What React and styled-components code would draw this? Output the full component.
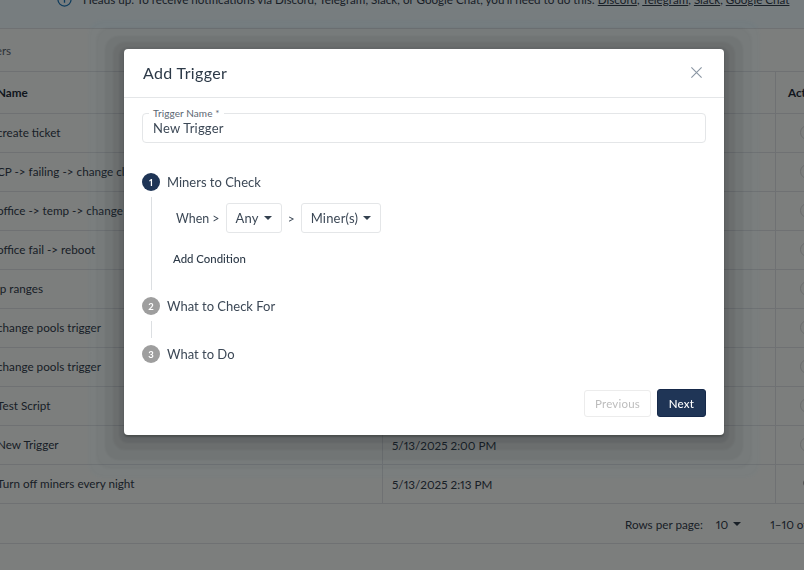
import React from 'react';
import styled, { createGlobalStyle } from 'styled-components';

const rows = [
  { name: 'create ticket' },
  { name: 'CP -> failing -> change clients' },
  { name: 'office -> temp -> change pool' },
  { name: 'office fail -> reboot' },
  { name: 'ip ranges' },
  { name: 'change pools trigger' },
  { name: 'change pools trigger' },
  { name: 'Test Script' },
  { name: 'New Trigger', date: '5/13/2025 2:00 PM' },
  { name: 'Turn off miners every night', date: '5/13/2025 2:13 PM' },
];

const steps = [
  { label: 'What to Check For', num: 2, tail: true },
  { label: 'What to Do', num: 3 },
];

export default function App() {
  return (
    <>
      <GlobalStyle />
      <Page>
        <Alert>
          <InfoIcon viewBox="0 0 16 16">
            <circle cx="8" cy="8" r="7" fill="none" stroke="currentColor" strokeWidth="1.3" />
            <path d="M8 7v4.5M8 4.4v1" stroke="currentColor" strokeWidth="1.4" />
          </InfoIcon>
          <span>
            Heads up: To receive notifications via Discord, Telegram, Slack, or Google Chat, you'll need to do this:{' '}
            <u>Discord</u>, <u>Telegram</u>, <u>Slack</u>, <u>Google Chat</u>
          </span>
        </Alert>
        <Tabs>Triggers</Tabs>
        <Table>
          <HeadRow>
            <NameCell>Name</NameCell>
            <DateCell />
            <ActionCell>Actions</ActionCell>
          </HeadRow>
          {rows.map((row, i) => (
            <Row key={i}>
              <NameCell>{row.name}</NameCell>
              <DateCell>{row.date}</DateCell>
              <ActionCell>
                <ActionDot $small={i === 9} />
              </ActionCell>
            </Row>
          ))}
        </Table>
        <Pagination>
          <span>Rows per page:</span>
          <PageSize>10</PageSize>
          <Caret />
          <PageRange>1–10 of 10</PageRange>
        </Pagination>
      </Page>

      <Backdrop>
        <Modal>
          <ModalHeader>
            <ModalTitle>Add Trigger</ModalTitle>
            <CloseIcon viewBox="0 0 14 14">
              <path d="M1.5 1.5l11 11M12.5 1.5l-11 11" stroke="currentColor" strokeWidth="1.2" fill="none" />
            </CloseIcon>
          </ModalHeader>
          <ModalBody>
            <Field>
              <FieldLabel>
                Trigger Name <Required>*</Required>
              </FieldLabel>
              New Trigger
            </Field>
            <Stepper>
              <StepHead>
                <StepNum $active>1</StepNum>
                <StepLabel>Miners to Check</StepLabel>
              </StepHead>
              <StepContent>
                <ConditionRow>
                  <WhenLabel>When &gt;</WhenLabel>
                  <Select>
                    Any <Caret $inSelect />
                  </Select>
                  <Sep>&gt;</Sep>
                  <Select>
                    Miner(s) <Caret $inSelect />
                  </Select>
                </ConditionRow>
                <AddCondition>Add Condition</AddCondition>
              </StepContent>
              {steps.map((step) => (
                <React.Fragment key={step.num}>
                  <StepHead>
                    <StepNum>{step.num}</StepNum>
                    <StepLabel>{step.label}</StepLabel>
                  </StepHead>
                  {step.tail && <StepTail />}
                </React.Fragment>
              ))}
            </Stepper>
            <ModalFooter>
              <GhostButton disabled>Previous</GhostButton>
              <PrimaryButton>Next</PrimaryButton>
            </ModalFooter>
          </ModalBody>
        </Modal>
      </Backdrop>
    </>
  );
}

const GlobalStyle = createGlobalStyle`
  html, body {
    margin: 0;
    height: 100%;
    overflow: hidden;
  }
  body {
    background: #f9fdfb;
    font-family: "Lato", "Noto Sans", sans-serif;
    font-variant-numeric: proportional-nums;
    color: #33404e;
  }
  * {
    box-sizing: border-box;
  }
`;

const Page = styled.div`
  width: 804px;
  height: 570px;
  overflow: hidden;
  font-size: 11.7px;
`;

const Alert = styled.div`
  display: flex;
  align-items: center;
  gap: 11px;
  height: 58px;
  margin-top: -29px;
  padding-left: 57px;
  background: #eefaff;
  border-bottom: 1px solid #dfe3e6;
  font-size: 11.65px;
  white-space: nowrap;
`;

const InfoIcon = styled.svg`
  width: 15px;
  height: 15px;
  flex: none;
  color: #1976b8;
`;

const Tabs = styled.div`
  display: flex;
  align-items: center;
  height: 43px;
  margin-left: -29px;
  border-bottom: 1px solid #dfe3e6;
  color: #5b6672;
`;

const Table = styled.div`
  margin-left: -4px;
  width: 900px;
`;

const Row = styled.div`
  display: grid;
  grid-template-columns: 386px 393px 1fr;
  height: 39px;
  border-bottom: 1px solid #dfe3e6;
`;

const HeadRow = styled(Row)`
  height: 42px;
  font-weight: 700;
  color: #222d3a;
`;

const Cell = styled.div`
  display: flex;
  align-items: center;
  white-space: nowrap;
  overflow: hidden;
`;

const NameCell = styled(Cell)`
  padding: 0 0 2px 1px;
`;

const DateCell = styled(Cell)`
  padding-left: 9px;
  border-left: 1px solid #dfe3e6;
`;

const ActionCell = styled(Cell)`
  padding: 0 0 2px 12px;
  border-left: 1px solid #dfe3e6;
`;

const ActionDot = styled.span`
  flex: none;
  width: ${({ $small }) => ($small ? '8px' : '15px')};
  height: ${({ $small }) => ($small ? '8px' : '15px')};
  margin-left: ${({ $small }) => ($small ? '15px' : '12px')};
  border-radius: 50%;
  border: 1.5px solid ${({ $small }) => ($small ? '#a0a0a0' : '#d6dadc')};
  background: ${({ $small }) => ($small ? '#a0a0a0' : 'transparent')};
`;

const Pagination = styled.div`
  display: flex;
  align-items: center;
  height: 40px;
  padding-left: 625px;
  border-bottom: 1px solid #dfe3e6;
  white-space: nowrap;
`;

const PageSize = styled.span`
  margin-left: 13px;
`;

const PageRange = styled.span`
  margin-left: 29px;
`;

const Caret = styled.span`
  display: inline-block;
  flex: none;
  margin-left: ${({ $inSelect }) => ($inSelect ? '3px' : '5px')};
  border-left: 4.5px solid transparent;
  border-right: 4.5px solid transparent;
  border-top: 4.5px solid #33404e;
`;

const Backdrop = styled.div`
  position: fixed;
  inset: 0;
  padding: 49px 0 0 124px;
  background: rgba(0, 0, 0, 0.5);
`;

const Modal = styled.div`
  width: 600px;
  height: 386px;
  background: #fff;
  border-radius: 4px;
  box-shadow:
    0 2px 2px rgba(0, 0, 0, 0.25),
    0 3px 2px 5px rgba(0, 0, 0, 0.07),
    0 4px 2px 11px rgba(0, 0, 0, 0.06),
    0 6px 2px 19px rgba(0, 0, 0, 0.05),
    0 6px 2px 28px rgba(40, 50, 60, 0.04),
    0 7px 3px 36px rgba(80, 115, 140, 0.05);
`;

const ModalHeader = styled.div`
  display: flex;
  align-items: center;
  justify-content: space-between;
  height: 49px;
  padding: 0 21px 1px 19px;
  border-bottom: 1px solid #e4e6e8;
`;

const ModalTitle = styled.h2`
  margin: 0;
  font-size: 16px;
  font-weight: 400;
  letter-spacing: 0.35px;
  color: #2d3a48;
`;

const CloseIcon = styled.svg`
  width: 13px;
  height: 13px;
  color: #8a96a3;
`;

const ModalBody = styled.div`
  padding: 15px 18px 0;
`;

const Field = styled.div`
  position: relative;
  display: flex;
  align-items: center;
  height: 30px;
  padding: 0 10px;
  border: 1px solid #e4e6e8;
  border-radius: 4px;
  font-size: 13px;
  letter-spacing: 0.2px;
  color: #3c4856;
`;

const FieldLabel = styled.span`
  position: absolute;
  top: -7px;
  left: 6px;
  padding: 0 4px;
  background: #fff;
  font-size: 10px;
  line-height: 12px;
  letter-spacing: 0.1px;
  color: #5b6672;
`;

const Required = styled.span`
  color: #5b6672;
`;

const Stepper = styled.div`
  display: flex;
  flex-direction: column;
  margin-top: 30px;
  color: #3c4856;
  font-size: 13px;
`;

const StepHead = styled.div`
  display: flex;
  align-items: center;
  gap: 7px;
  height: 18px;
`;

const StepNum = styled.span`
  display: flex;
  align-items: center;
  justify-content: center;
  width: 18px;
  height: 18px;
  border-radius: 50%;
  background: ${({ $active }) => ($active ? '#1f3556' : '#9e9e9e')};
  color: #fff;
  font-size: 9.5px;
  font-weight: 700;
`;

const StepLabel = styled.span`
  line-height: 18px;
`;

const StepContent = styled.div`
  height: 93px;
  margin: 6px 0 7px 9px;
  padding: 6px 0 0 21px;
  border-left: 1px solid #dcdfe2;
`;

const StepTail = styled.div`
  height: 17px;
  margin: 6px 0 7px 9px;
  border-left: 1px solid #dcdfe2;
`;

const ConditionRow = styled.div`
  display: flex;
  align-items: center;
  gap: 6px;
  margin-left: 3px;
`;

const WhenLabel = styled.span`
  font-size: 12.4px;
`;

const Select = styled.div`
  display: flex;
  align-items: center;
  gap: 2px;
  height: 30px;
  padding: 0 9px;
  border: 1px solid #e4e6e8;
  border-radius: 3px;
  letter-spacing: 0.2px;
`;

const Sep = styled.span`
  font-size: 12px;
`;

const AddCondition = styled.div`
  margin-top: 19px;
  font-size: 11.4px;
  line-height: 14px;
  font-weight: 500;
  color: #2d3a48;
`;

const ModalFooter = styled.div`
  display: flex;
  align-items: center;
  justify-content: flex-end;
  gap: 6px;
  margin-top: 26px;
`;

const GhostButton = styled.button`
  width: 67px;
  height: 27px;
  padding: 0;
  border: 1px solid #ececec;
  border-radius: 3px;
  background: #fff;
  color: #bdbdbd;
  font: inherit;
  font-size: 11.5px;
  letter-spacing: 0.2px;
`;

const PrimaryButton = styled.button`
  width: 49px;
  height: 28px;
  padding: 0;
  border: 1px solid #16294a;
  border-radius: 3px;
  background: #1f3556;
  color: #fff;
  font: inherit;
  font-size: 11.5px;
  font-weight: 500;
  letter-spacing: 0.2px;
`;
